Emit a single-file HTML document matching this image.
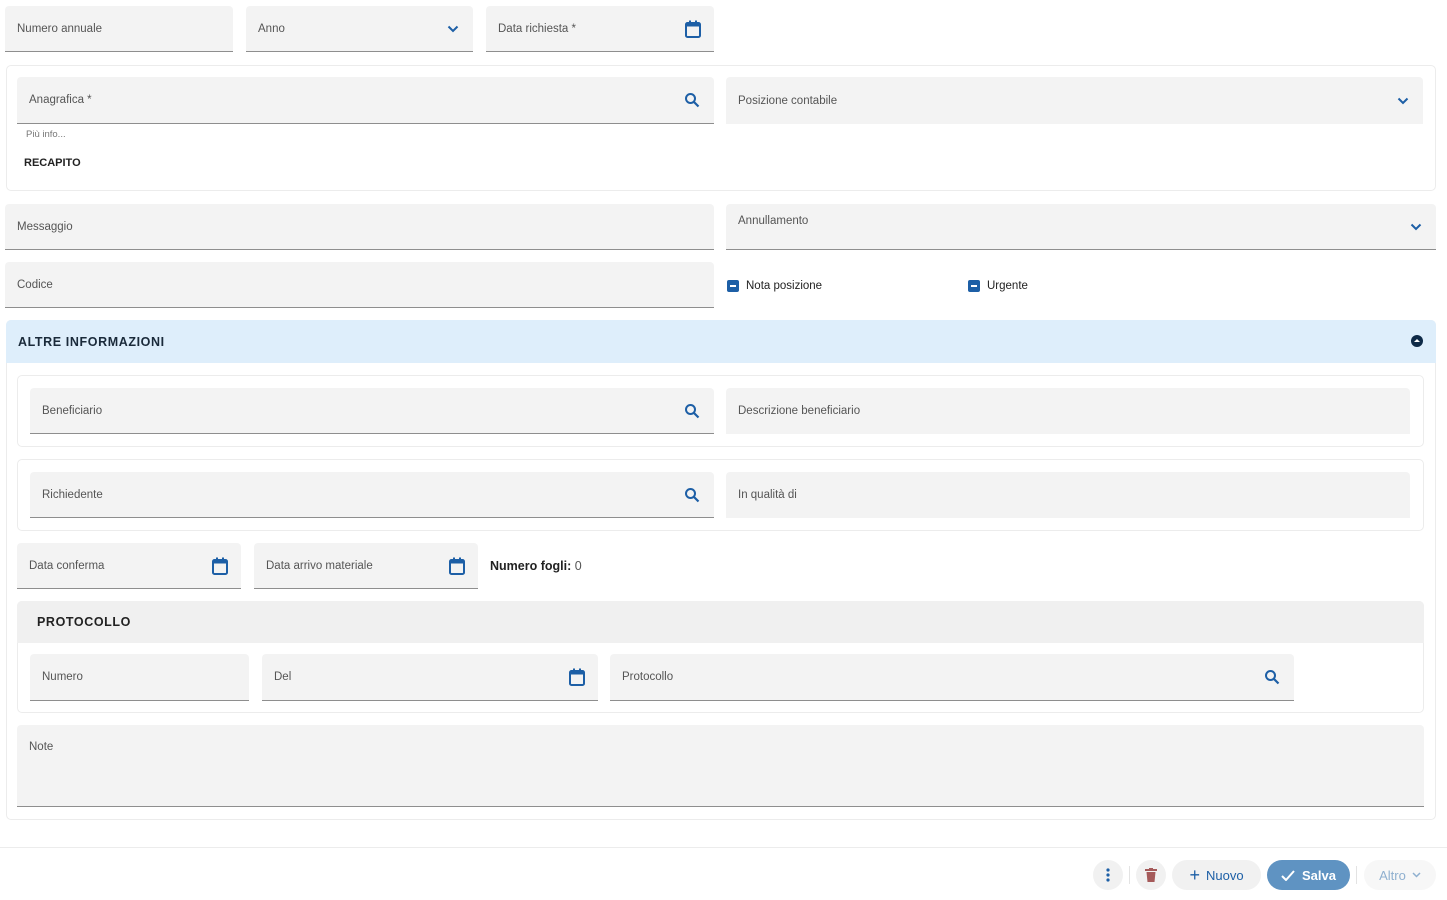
<!DOCTYPE html>
<html><head><meta charset="utf-8"><style>
*{box-sizing:border-box;margin:0;padding:0}
body{width:1447px;height:900px;background:#fff;font-family:"Liberation Sans",sans-serif;position:relative;overflow:hidden;color:#222}
.f{position:absolute;background:#f3f3f3;border-bottom:1px solid #8e8e8e;border-radius:4px 4px 0 0;font-size:11.5px;color:#555}
.f.nb{border-bottom:none}
.f span{position:absolute;left:12px;top:50%;transform:translateY(-50%)}
.f svg{position:absolute;right:14px;top:50%;transform:translateY(-50%)}
.card{position:absolute;border:1px solid #ececec;border-radius:5px;background:#fff}
.t{position:absolute;font-size:11.5px}
.btn{position:absolute;top:860px;height:30px;border-radius:15px;background:#f1f1f1;display:flex;align-items:center;justify-content:center;font-size:13px}
</style></head><body>
<svg width="0" height="0" style="position:absolute"><defs>
<symbol id="cal" viewBox="0 0 18 20"><rect x="2" y="4" width="14" height="14" rx="1.5" fill="none" stroke="#1d5fa6" stroke-width="2"/><rect x="2" y="4" width="14" height="3.5" fill="#1d5fa6"/><rect x="5" y="1.5" width="2" height="3" fill="#1d5fa6"/><rect x="11" y="1.5" width="2" height="3" fill="#1d5fa6"/></symbol>
<symbol id="srch" viewBox="0 0 16 16"><circle cx="6.5" cy="6.5" r="4.5" fill="none" stroke="#1d5fa6" stroke-width="2"/><path d="M10 10l4.5 4.5" stroke="#1d5fa6" stroke-width="2.2"/></symbol>
<symbol id="chev" viewBox="0 0 12 8"><path d="M1.5 1.5l4.5 4.5 4.5-4.5" fill="none" stroke="#1d5fa6" stroke-width="2"/></symbol>
</defs></svg>

<div class="f" style="left:5px;top:6px;width:228px;height:46px"><span>Numero annuale</span></div>
<div class="f" style="left:246px;top:6px;width:227px;height:46px"><span>Anno</span><svg width="12" height="8"><use href="#chev"/></svg></div>
<div class="f" style="left:486px;top:6px;width:228px;height:46px"><span>Data richiesta *</span><svg width="18" height="20" style="right:12px"><use href="#cal"/></svg></div>

<div class="card" style="left:6px;top:65px;width:1430px;height:126px"></div>
<div class="f" style="left:17px;top:77px;width:697px;height:47px"><span>Anagrafica *</span><svg width="16" height="16"><use href="#srch"/></svg></div>
<div class="f nb" style="left:726px;top:77px;width:697px;height:47px"><span>Posizione contabile</span><svg width="12" height="8"><use href="#chev"/></svg></div>
<div class="t" style="left:26px;top:129px;font-size:9.5px;color:#777">Più info...</div>
<div class="t" style="left:24px;top:157px;font-weight:bold;font-size:11px">RECAPITO</div>

<div class="f" style="left:5px;top:204px;width:709px;height:46px"><span>Messaggio</span></div>
<div class="f" style="left:726px;top:204px;width:710px;height:46px"><span style="top:11px;transform:none">Annullamento</span><svg width="12" height="8" style="top:19px;transform:none"><use href="#chev"/></svg></div>
<div class="f" style="left:5px;top:262px;width:709px;height:46px"><span>Codice</span></div>
<div style="position:absolute;left:727px;top:280px;width:12px;height:12px;background:#1d5fa6;border-radius:2px"><div style="margin:5px 3px;height:2px;background:#fff"></div></div>
<div class="t" style="left:746px;top:280px">Nota posizione</div>
<div style="position:absolute;left:968px;top:280px;width:12px;height:12px;background:#1d5fa6;border-radius:2px"><div style="margin:5px 3px;height:2px;background:#fff"></div></div>
<div class="t" style="left:987px;top:280px">Urgente</div>

<div class="card" style="left:6px;top:320px;width:1430px;height:500px"></div>
<div style="position:absolute;left:6px;top:320px;width:1430px;height:43px;background:#deeefb;border-radius:5px 5px 0 0"></div>
<div class="t" style="left:18px;top:335px;font-weight:bold;font-size:12.5px;letter-spacing:.6px;color:#1a2a3a">ALTRE INFORMAZIONI</div>
<div style="position:absolute;left:1411px;top:335px;width:12px;height:12px;border-radius:50%;background:#0e2a47"><div style="position:absolute;left:3px;top:4px;border:3px solid transparent;border-bottom:3px solid #fff;border-top:none"></div></div>

<div class="card" style="left:17px;top:375px;width:1407px;height:72px"></div>
<div class="f" style="left:30px;top:388px;width:684px;height:46px"><span>Beneficiario</span><svg width="16" height="16"><use href="#srch"/></svg></div>
<div class="f nb" style="left:726px;top:388px;width:684px;height:46px"><span>Descrizione beneficiario</span></div>
<div class="card" style="left:17px;top:459px;width:1407px;height:72px"></div>
<div class="f" style="left:30px;top:472px;width:684px;height:46px"><span>Richiedente</span><svg width="16" height="16"><use href="#srch"/></svg></div>
<div class="f nb" style="left:726px;top:472px;width:684px;height:46px"><span>In qualità di</span></div>

<div class="f" style="left:17px;top:543px;width:224px;height:46px"><span>Data conferma</span><svg width="18" height="20" style="right:12px"><use href="#cal"/></svg></div>
<div class="f" style="left:254px;top:543px;width:224px;height:46px"><span>Data arrivo materiale</span><svg width="18" height="20" style="right:12px"><use href="#cal"/></svg></div>
<div class="t" style="left:490px;top:559px;font-size:12.5px"><b>Numero fogli:</b> <span style="color:#555">0</span></div>

<div class="card" style="left:17px;top:601px;width:1407px;height:112px"></div>
<div style="position:absolute;left:17px;top:601px;width:1407px;height:42px;background:#f0f0f0;border-radius:5px 5px 0 0"></div>
<div class="t" style="left:37px;top:615px;font-weight:bold;font-size:12.5px;letter-spacing:.6px">PROTOCOLLO</div>
<div class="f" style="left:30px;top:654px;width:219px;height:47px"><span>Numero</span></div>
<div class="f" style="left:262px;top:654px;width:336px;height:47px"><span>Del</span><svg width="18" height="20" style="right:12px"><use href="#cal"/></svg></div>
<div class="f" style="left:610px;top:654px;width:684px;height:47px"><span>Protocollo</span><svg width="16" height="16"><use href="#srch"/></svg></div>

<div class="f" style="left:17px;top:725px;width:1407px;height:82px"><span style="top:16px;transform:none">Note</span></div>

<div style="position:absolute;left:0;top:847px;width:1447px;height:1px;background:#ececec"></div>
<div class="btn" style="left:1093px;width:30px"><svg width="4" height="14"><circle cx="2" cy="2" r="1.6" fill="#1d5fa6"/><circle cx="2" cy="7" r="1.6" fill="#1d5fa6"/><circle cx="2" cy="12" r="1.6" fill="#1d5fa6"/></svg></div>
<div style="position:absolute;left:1129px;top:866px;width:1px;height:18px;background:#e3e3e3"></div>
<div class="btn" style="left:1136px;width:30px"><svg width="12" height="14"><rect x="0" y="1" width="12" height="2" fill="#a55a5a"/><rect x="4" y="0" width="4" height="2" fill="#a55a5a"/><path d="M1.5 4h9l-1 10h-7z" fill="#a55a5a"/></svg></div>
<div class="btn" style="left:1172px;width:89px;color:#1d5fa6"><span style="font-size:18px;margin-right:6px;line-height:1">+</span>Nuovo</div>
<div class="btn" style="left:1267px;width:83px;background:#5f93c2;color:#fff;font-weight:bold"><svg width="14" height="11" style="margin-right:7px"><path d="M1 6l4 4 8-9" fill="none" stroke="#fff" stroke-width="2"/></svg>Salva</div>
<div style="position:absolute;left:1356px;top:866px;width:1px;height:18px;background:#e3e3e3"></div>
<div class="btn" style="left:1364px;width:72px;background:#f7f7f7;color:#8fb0d0">Altro<svg width="9" height="6" style="margin-left:6px"><path d="M1 1l3.5 3.5L8 1" fill="none" stroke="#8fb0d0" stroke-width="1.5"/></svg></div>
</body></html>
